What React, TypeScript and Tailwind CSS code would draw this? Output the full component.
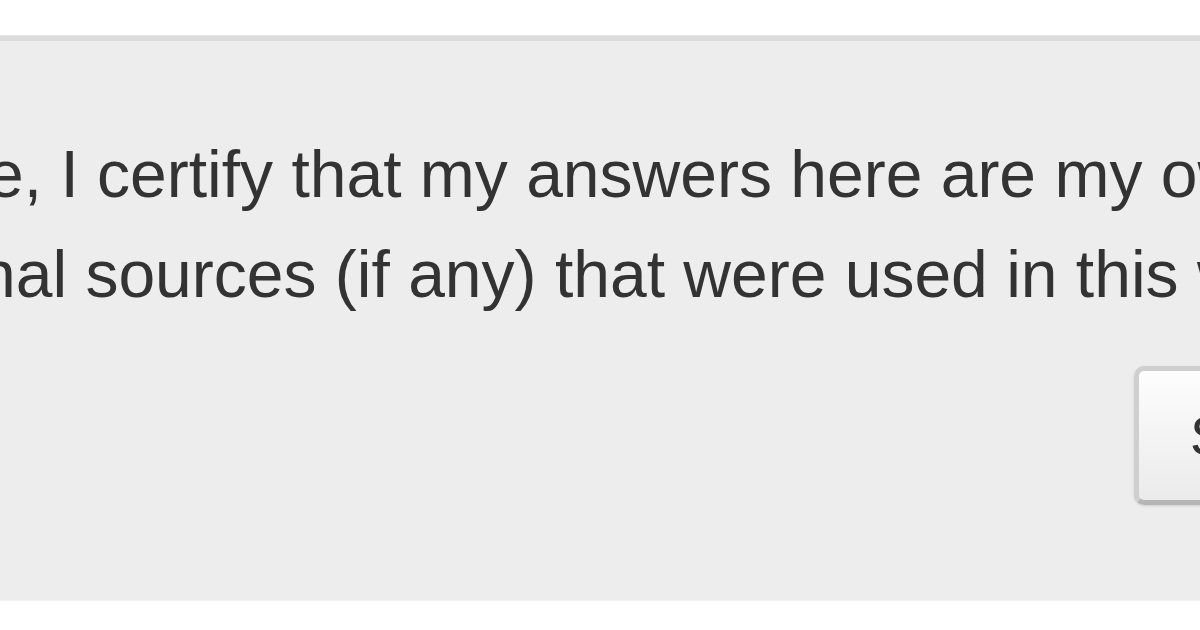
export default function App() {
  return (
    <div className="w-[1200px] h-[630px] bg-white overflow-hidden font-['Liberation_Sans',Arial,sans-serif] text-[#333333]">
      <div className="h-[35px] bg-white" />
      <div className="h-[565px] bg-[#ededed] border-t border-[#e6e6e6] overflow-hidden">
        <div className="h-[5px] bg-[#dcdcdc]" />
        {/* honor statement */}
        <div className="pt-[83px] text-[66px] leading-[100px] whitespace-nowrap">
          <p className="ml-[-13px]">e, I certify that my answers here are my own work</p>
          <p className="ml-[-21px]">nal sources (if any) that were used in this work.</p>
        </div>
        <div className="flex mt-[42px]">
          <button className="ml-[1134px] shrink-0 h-[139px] px-[51px] flex items-center text-[56px] text-[#333333] rounded-[10px] border-[5px] border-[#cfcfcf] border-b-[#b5b5b5] bg-gradient-to-b from-[#fdfdfd] to-[#ebebeb] shadow-sm">
            Submit
          </button>
        </div>
      </div>
      <div className="h-[30px] bg-white border-t border-[#f2f2f2]" />
    </div>
  );
}
